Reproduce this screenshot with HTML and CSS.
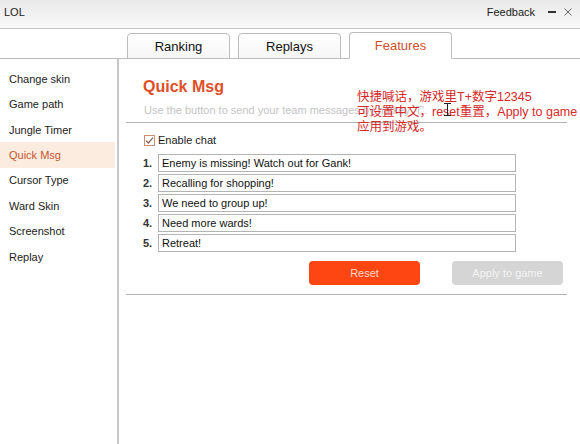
FILE: index.html
```html
<!DOCTYPE html>
<html lang="en">
<head>
    <meta charset="UTF-8">
    <meta name="viewport" content="width=device-width, initial-scale=1.0">
    <title>LOL</title>
    <link rel="stylesheet" href="styles.css">
</head>
<body>

    <div class="window">
        <!-- Title Bar -->
        <div class="titlebar">
            <span class="app-name">LOL</span>
            <div class="title-actions">
                <span class="feedback">Feedback</span>
                <span class="win-btn minimize"></span>
                <svg class="win-btn close" width="8" height="8" viewBox="0 0 8 8">
                    <path d="M0.5 0.5 L7.5 7.5 M7.5 0.5 L0.5 7.5" stroke="#666" stroke-width="1"/>
                </svg>
            </div>
        </div>

        <!-- Tabs -->
        <div class="tabbar">
            <div class="tab">Ranking</div>
            <div class="tab">Replays</div>
            <div class="tab active">Features</div>
        </div>

        <div class="main">
            <ul class="sidebar">
                <li>Change skin</li>
                <li>Game path</li>
                <li>Jungle Timer</li>
                <li class="active">Quick Msg</li>
                <li>Cursor Type</li>
                <li>Ward Skin</li>
                <li>Screenshot</li>
                <li>Replay</li>
            </ul>

            <div class="content">
                <h1 class="panel-title">Quick Msg</h1>
                <p class="panel-desc">Use the button to send your team messages by hotkey 'T'.</p>
                <div class="divider"></div>

                <label class="check-row">
                    <span class="checkbox">
                        <svg width="9" height="9" viewBox="0 0 9 9"><path d="M1 4.6 L3.4 7 L8 1.6" fill="none" stroke="#8a5a48" stroke-width="1.2"/></svg>
                    </span>
                    Enable chat
                </label>

                <ol class="msg-list">
                    <li><span class="num">1.</span><input class="msg-input" type="text" value="Enemy is missing! Watch out for Gank!"></li>
                    <li><span class="num">2.</span><input class="msg-input" type="text" value="Recalling for shopping!"></li>
                    <li><span class="num">3.</span><input class="msg-input" type="text" value="We need to group up!"></li>
                    <li><span class="num">4.</span><input class="msg-input" type="text" value="Need more wards!"></li>
                    <li><span class="num">5.</span><input class="msg-input" type="text" value="Retreat!"></li>
                </ol>

                <div class="actions">
                    <button class="btn btn-reset">Reset</button>
                    <button class="btn btn-apply" disabled>Apply to game</button>
                </div>
                <div class="divider"></div>
            </div>
        </div>

        <!-- Note written over the panel -->
        <div class="note">
            快捷喊话，游戏里T+数字12345<br>
            可设置中文，reset重置，Apply to game<br>
            应用到游戏。
        </div>
        <svg class="ibeam" width="9" height="13" viewBox="0 0 9 13">
            <path d="M1 0.5 H8 M4.5 0.5 V12.5 M1 12.5 H8" fill="none" stroke="#222" stroke-width="1"/>
        </svg>
    </div>

</body>
</html>
```

FILE: styles.css
```css
* {
    box-sizing: border-box;
}

body {
    margin: 0;
    background-color: #ffffff;
    font-family: "Liberation Sans", Arial, sans-serif;
    font-size: 11px;
    color: #1a1a1a;
}

.window {
    position: relative;
    width: 580px;
    height: 444px;
    overflow: hidden;
    display: flex;
    flex-direction: column;
}

/* Title Bar */
.titlebar {
    height: 29px;
    flex-shrink: 0;
    display: flex;
    justify-content: space-between;
    align-items: center;
    padding: 0 8px 4px 4px;
    background: linear-gradient(#e9e9e9, #f9f9f9);
    border-bottom: 1px solid #c6c6c6;
}

.app-name {
    font-size: 11px;
    color: #222;
}

.title-actions {
    display: flex;
    align-items: center;
}

.feedback {
    font-size: 11px;
    color: #222;
    margin-right: 13px;
}

.win-btn.minimize {
    width: 8px;
    height: 2px;
    background-color: #333;
    margin-right: 8px;
}

/* Tabs */
.tabbar {
    height: 30px;
    flex-shrink: 0;
    display: flex;
    align-items: flex-end;
    gap: 8px;
    padding-left: 127px;
    border-bottom: 1px solid #bcbcbc;
}

.tab {
    width: 103px;
    height: 26px;
    margin-bottom: -1px;
    display: flex;
    justify-content: center;
    align-items: center;
    font-size: 13px;
    color: #111;
    background: linear-gradient(#ffffff, #f6f6f6);
    border: 1px solid #bcbcbc;
    border-radius: 4px 4px 0 0;
}

.tab.active {
    height: 27px;
    color: #cf4f2c;
    background: #ffffff;
    border-bottom-color: #ffffff;
}

/* Layout */
.main {
    flex: 1;
    display: flex;
}

/* Sidebar */
.sidebar {
    list-style: none;
    margin: 0;
    padding: 7px 0 0;
    width: 119px;
    flex-shrink: 0;
    border-right: 2px solid #c8c8c8;
}

.sidebar li {
    height: 25.45px;
    display: flex;
    align-items: center;
    padding-left: 9px;
    margin-right: 2px;
    font-size: 11px;
    color: #222;
}

.sidebar li.active {
    background-color: #fcebdf;
    color: #c2562f;
}

/* Content Panel */
.content {
    flex: 1;
    padding-top: 19px;
}

.panel-title {
    margin: 0 0 0 24px;
    font-size: 16px;
    line-height: 18px;
    font-weight: bold;
    color: #df4f27;
}

.panel-desc {
    margin: 8px 0 0 25px;
    line-height: 13px;
    font-size: 11px;
    color: #c4c4c4;
}

.divider {
    height: 1px;
    margin: 5px 13px 0 7px;
    background-color: #b3b3b3;
}

.check-row {
    display: flex;
    align-items: center;
    margin: 11px 0 0 25px;
    height: 12px;
    font-size: 11px;
    color: #1a1a1a;
}

.checkbox {
    width: 11px;
    height: 11px;
    margin-right: 3px;
    display: flex;
    justify-content: center;
    align-items: center;
    border: 1px solid #cf8f74;
    background-color: #fff;
}

.msg-list {
    list-style: none;
    margin: 8px 0 0;
    padding: 0 0 0 24px;
    display: flex;
    flex-direction: column;
    gap: 2px;
}

.msg-list li {
    display: flex;
    align-items: center;
    height: 18px;
}

.num {
    width: 15px;
    font-size: 11px;
    font-weight: bold;
    color: #333;
}

.msg-input {
    width: 358px;
    height: 18px;
    padding: 0 3px;
    border: 1px solid #b4b4b4;
    font-family: "Liberation Sans", Arial, sans-serif;
    font-size: 11px;
    color: #111;
    background-color: #fff;
    outline: none;
}

.actions {
    display: flex;
    gap: 32px;
    margin: 9px 0 0 190px;
}

.btn {
    width: 111px;
    height: 24px;
    border: none;
    border-radius: 4px;
    font-family: "Liberation Sans", Arial, sans-serif;
    font-size: 11px;
}

.btn-reset {
    background-color: #fd4612;
    color: #ffd9cc;
}

.btn-apply {
    background-color: #d5d5d5;
    color: #f3f3f3;
}

.actions + .divider {
    margin-top: 9px;
}

/* Red note over the panel */
.note {
    position: absolute;
    left: 357px;
    top: 90px;
    font-family: "Liberation Sans", "Noto Sans CJK SC", sans-serif;
    font-size: 12.5px;
    line-height: 15px;
    color: #d42a2a;
}

.ibeam {
    position: absolute;
    left: 443px;
    top: 103px;
}
```
